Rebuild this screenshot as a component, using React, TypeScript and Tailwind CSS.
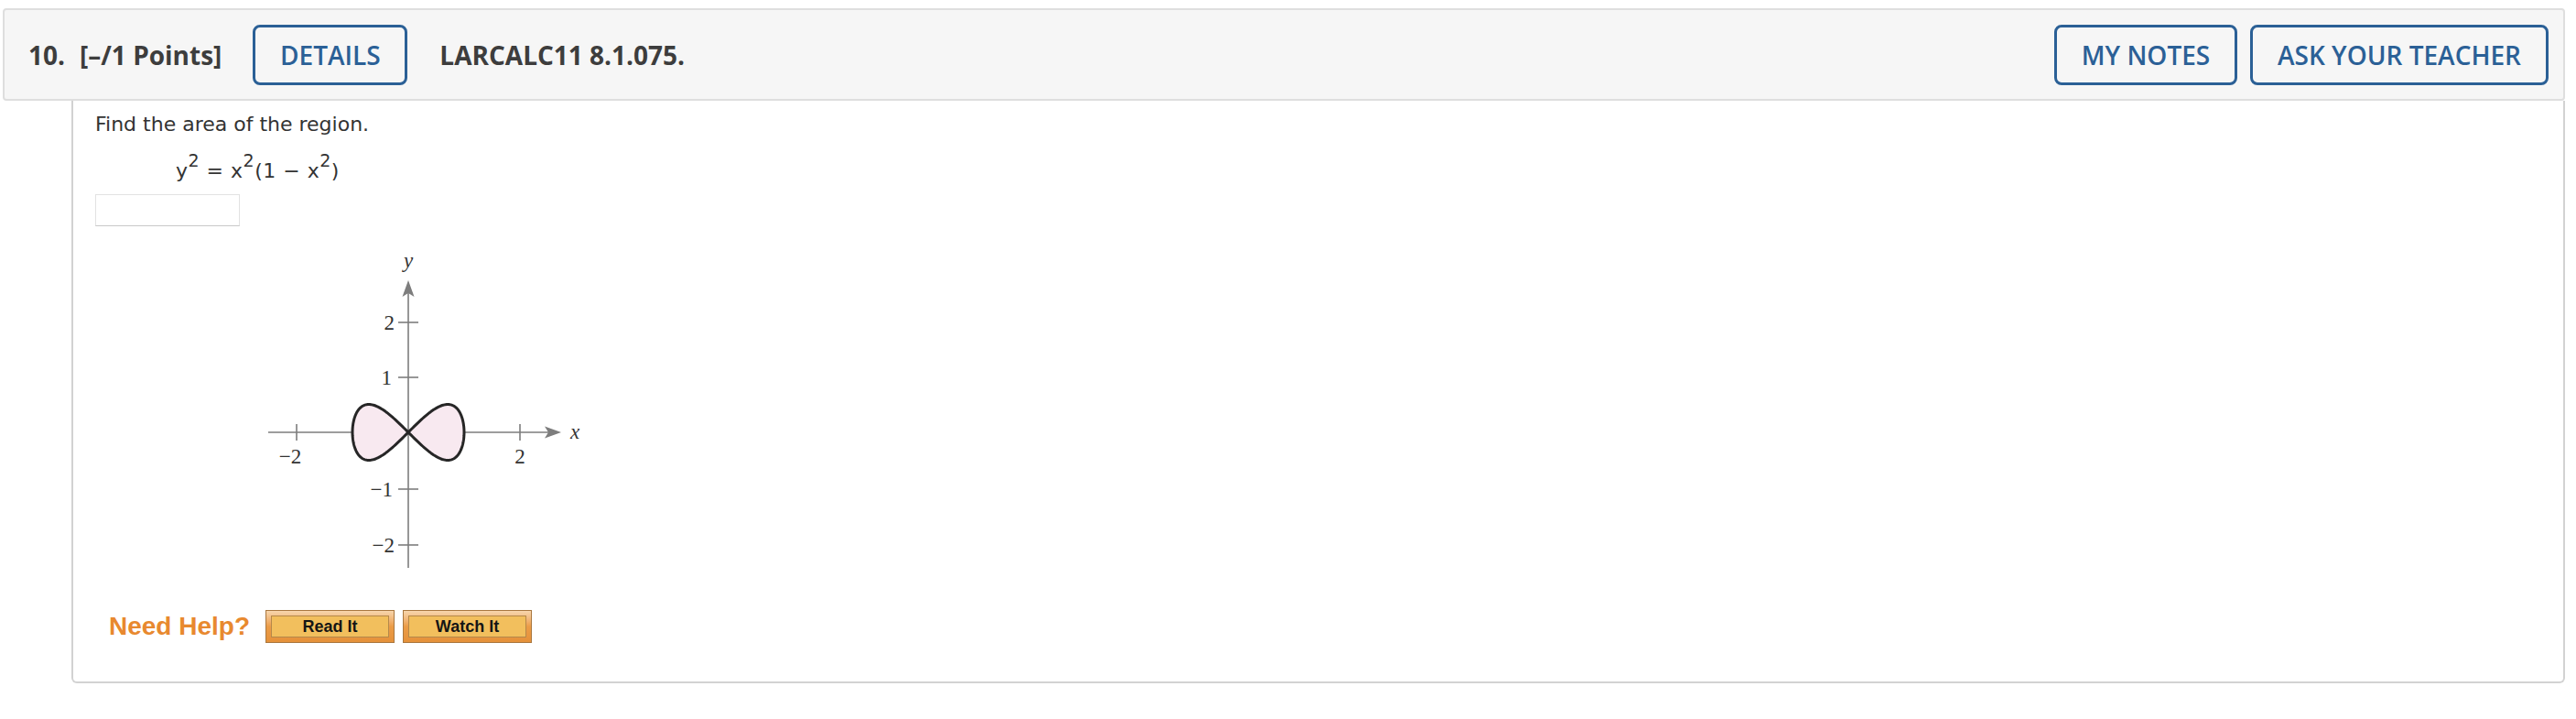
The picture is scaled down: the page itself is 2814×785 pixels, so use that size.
import React from 'react'

const openSans = { fontFamily: '"Open Sans", "Liberation Sans", sans-serif' }

function buildCurve() {
  const cx = 166
  const cy = 197
  const u = 61
  const pts: string[] = []
  for (let i = 0; i <= 240; i++) {
    const t = (i / 240) * Math.PI * 2
    const x = cx + u * Math.sin(t)
    const y = cy - u * Math.sin(t) * Math.cos(t)
    pts.push(`${i === 0 ? 'M' : 'L'}${x.toFixed(2)} ${y.toFixed(2)}`)
  }
  return pts.join(' ') + ' Z'
}

function Graph() {
  const labelFont = '"Liberation Serif", "Times New Roman", serif'
  return (
    <svg width="380" height="360" viewBox="0 0 380 360" className="block">
      <g transform="translate(0,10)">
        {/* axes */}
        <line x1="13" y1="197" x2="322" y2="197" stroke="#7d7d7d" strokeWidth="1.6" />
        <polygon points="333,197 315,190.5 319,197 315,203.5" fill="#7d7d7d" />
        <line x1="166" y1="345" x2="166" y2="44" stroke="#7d7d7d" strokeWidth="1.6" />
        <polygon points="166,31 159.5,49 166,45 172.5,49" fill="#7d7d7d" />
        {/* ticks */}
        {[44, 288].map(x => (
          <line key={x} x1={x} y1="188" x2={x} y2="206" stroke="#7d7d7d" strokeWidth="1.6" />
        ))}
        {[77, 137, 259, 320].map(y => (
          <line key={y} x1="155" y1={y} x2="177" y2={y} stroke="#7d7d7d" strokeWidth="1.6" />
        ))}
        {/* shaded region */}
        <path d={buildCurve()} fill="#f8e9f0" stroke="#262626" strokeWidth="3" strokeLinejoin="round" />
        <g fill="#333" fontFamily={labelFont} fontSize="23">
          <text x="151" y="85" textAnchor="end">2</text>
          <text x="148" y="145" textAnchor="end">1</text>
          <text x="149" y="267" textAnchor="end">−1</text>
          <text x="151" y="328" textAnchor="end">−2</text>
          <text x="37" y="231" textAnchor="middle">−2</text>
          <text x="288" y="231" textAnchor="middle">2</text>
          <text x="348" y="204" textAnchor="middle" fontStyle="italic">x</text>
          <text x="166" y="17" textAnchor="middle" fontStyle="italic">y</text>
        </g>
      </g>
    </svg>
  )
}

function OutlineButton({ label, width }: { label: string; width: string }) {
  return (
    <button
      className={`${width} h-[66px] flex items-center justify-center border-[3px] border-[#2b6096] rounded-[8px] text-[28px] font-semibold text-[#2b6096] leading-none bg-transparent whitespace-nowrap`}
      style={openSans}
    >
      {label}
    </button>
  )
}

function HelpButton({ label }: { label: string }) {
  return (
    <button className="w-[141px] h-[36px] p-[5px] border border-[#a9773f] bg-linear-to-b from-[#f7d6ad] via-[#eb9c47] to-[#e5913a]">
      <span
        className="flex items-center justify-center w-full h-full border border-[#b5884a] bg-[#f2bf5d] text-[18px] font-bold text-[#151515] leading-none"
        style={{ fontFamily: '"Liberation Sans", Arial, sans-serif' }}
      >
        {label}
      </span>
    </button>
  )
}

export default function App() {
  return (
    <div className="min-h-screen bg-white pt-[9px] pl-[3px] pr-[12px]">
      <div className="h-[101px] border-2 border-[#dedede] bg-[#f6f6f6] rounded-[4px] flex items-center pl-[26px] pr-[16px]">
        <span className="text-[28px] font-bold text-[#3d3d3d] leading-none" style={openSans}>10.</span>
        <span className="ml-[16px] text-[28px] font-bold text-[#3d3d3d] leading-none" style={openSans}>[–/1 Points]</span>
        <div className="ml-[34px]">
          <OutlineButton label="DETAILS" width="w-[169px]" />
        </div>
        <span className="ml-[35px] text-[28px] font-bold text-[#3d3d3d] leading-none" style={openSans}>LARCALC11 8.1.075.</span>
        <div className="ml-auto flex items-center gap-[14px]">
          <OutlineButton label="MY NOTES" width="w-[200px]" />
          <OutlineButton label="ASK YOUR TEACHER" width="w-[326px]" />
        </div>
      </div>

      <div
        className="ml-[75px] h-[636px] border-2 border-t-0 border-[#d2d2d2] rounded-b-[6px] pl-[24px] pt-[11px] text-[#333]"
        style={{ fontFamily: '"DejaVu Sans", Verdana, sans-serif' }}
      >
        <p className="text-[22px] leading-[30px]">Find the area of the region.</p>
        <p className="ml-[88px] mt-[21px] text-[22px] leading-[30px] tracking-[0.5px]">
          y<span className="relative -top-[12px] text-[19px]">2</span> = x<span className="relative -top-[12px] text-[19px]">2</span>(1 − x<span className="relative -top-[12px] text-[19px]">2</span>)
        </p>
        <div className="mt-[10px] w-[158px] h-[35px] border border-[#e2e2e2] border-b-[#c9c9c9] bg-white" />
        <div className="mt-[18px] ml-[176px]">
          <Graph />
        </div>
        <div className="mt-[41px] ml-[15px] flex items-center">
          <span
            className="text-[28px] font-bold text-[#e8892f] leading-none mr-[17px]"
            style={{ fontFamily: '"Liberation Sans", Arial, sans-serif' }}
          >
            Need Help?
          </span>
          <HelpButton label="Read It" />
          <div className="w-[9px]" />
          <HelpButton label="Watch It" />
        </div>
      </div>
    </div>
  )
}
